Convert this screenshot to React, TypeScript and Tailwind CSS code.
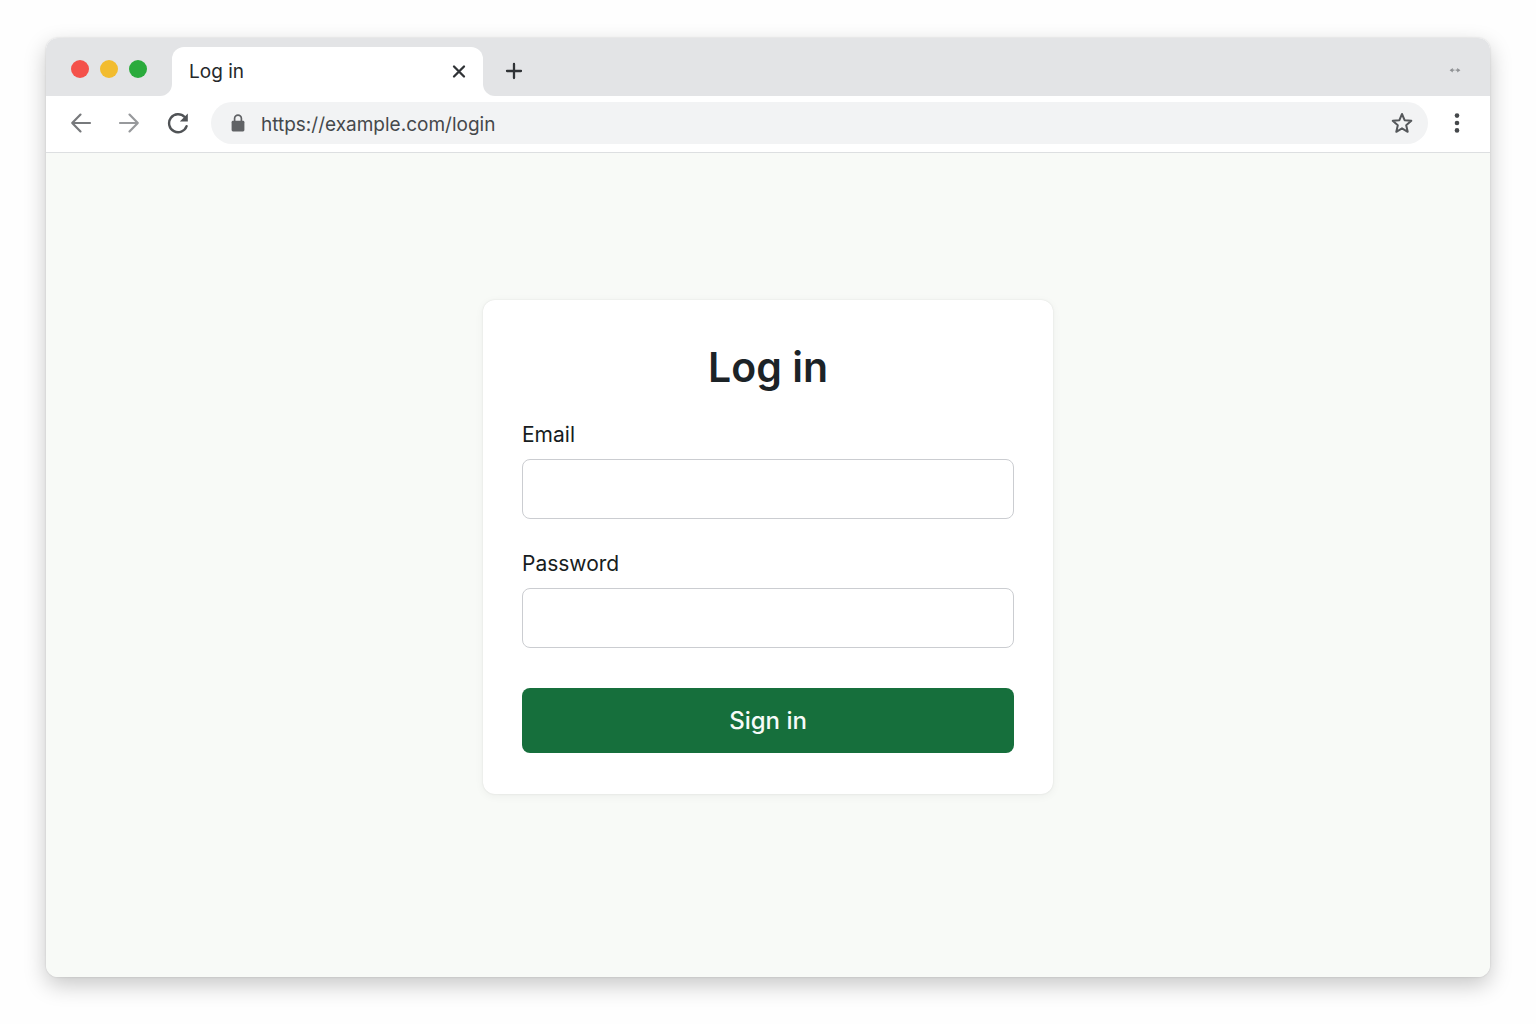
import type { ReactNode } from "react";

const CONTROLS = [
  { label: "Close window", color: "bg-[#f4514a]" },
  { label: "Minimize window", color: "bg-[#f2bc2f]" },
  { label: "Maximize window", color: "bg-[#2aab3c]" },
];

function IconButton({ label, className, children }: { label: string; className: string; children: ReactNode }) {
  return (
    <button type="button" aria-label={label} className={`flex shrink-0 items-center justify-center ${className}`}>
      {children}
    </button>
  );
}

function TabStrip() {
  return (
    <div className="flex h-[58px] bg-white">
      <div className="flex w-[126px] shrink-0 items-center gap-[11px] rounded-br-xl bg-[#e3e4e6] pt-[3px] pl-[25px]">
        {CONTROLS.map((c) => (
          <button key={c.label} type="button" aria-label={c.label} className={`size-[18px] rounded-full ${c.color}`} />
        ))}
      </div>
      <div className="w-[311px] bg-[#e3e4e6] pt-[9px]">
        <div className="flex h-full items-center justify-between rounded-t-xl bg-white pr-4 pl-[17px]">
          <span className="text-[19px] leading-6 text-[#25282b]">Log in</span>
          <IconButton label="Close tab" className="size-4 text-[#303336]">
            <svg viewBox="0 0 16 16" className="size-4" fill="none" stroke="currentColor" strokeWidth="2.3" strokeLinecap="round">
              <path d="M3 2.5l10 10M13 2.5L3 12.5" />
            </svg>
          </IconButton>
        </div>
      </div>
      <div className="flex flex-1 items-center justify-between rounded-bl-xl bg-[#e3e4e6] pt-2 pr-7 pl-[22px]">
        <IconButton label="New tab" className="size-[18px] text-[#303336]">
          <svg viewBox="0 0 18 18" className="size-[18px]" fill="none" stroke="currentColor" strokeWidth="2.3" strokeLinecap="round">
            <path d="M9 2v14M2 9h14" />
          </svg>
        </IconButton>
        <svg viewBox="0 0 14 8" className="h-2 w-[14px] text-[#8f9194]" fill="currentColor" aria-hidden="true">
          <path d="M1.6 3.2L4.8 1v1.6h1.6v1.2H4.8v1.6zM12.4 3.2L9.2 1v1.6H7.6v1.2h1.6v1.6z" />
        </svg>
      </div>
    </div>
  );
}

function Toolbar() {
  return (
    <div className="flex h-[57px] items-center border-b border-[#dddfe1] bg-white pr-[22px] pb-[2px] pl-6">
      <div className="flex items-center gap-[26px]">
        <IconButton label="Back" className="size-[22px] text-[#77797c]">
          <svg viewBox="0 0 22 22" className="size-[22px]" fill="none" stroke="currentColor" strokeWidth="2.2" strokeLinecap="round" strokeLinejoin="round">
            <path d="M20 11H2.2M10.5 2.6L2.2 11l8.3 8.4" />
          </svg>
        </IconButton>
        <IconButton label="Forward" className="size-[22px] text-[#97999c]">
          <svg viewBox="0 0 22 22" className="size-[22px]" fill="none" stroke="currentColor" strokeWidth="2.2" strokeLinecap="round" strokeLinejoin="round">
            <path d="M2 11h17.8M11.5 2.6l8.3 8.4-8.3 8.4" />
          </svg>
        </IconButton>
        <IconButton label="Reload" className="size-[22px] text-[#505356]">
          <svg viewBox="0 0 22 22" className="size-[22px]" fill="none">
            <path d="M20.6 14.2A9 9 0 1 1 18.6 5" stroke="currentColor" strokeWidth="2.4" strokeLinecap="round" />
            <path d="M21.8 1.4v8h-8z" fill="currentColor" />
          </svg>
        </IconButton>
      </div>
      <div className="ml-[23px] flex h-[42px] flex-1 items-center rounded-full bg-[#f2f3f4] pr-[14px] pl-5">
        <svg viewBox="0 0 14 18" className="h-[18px] w-[14px] shrink-0 text-[#606265]" aria-hidden="true">
          <path d="M3.6 8V4.6a3.4 3.4 0 0 1 6.8 0V8" fill="none" stroke="currentColor" strokeWidth="1.7" />
          <rect x="0.6" y="6.8" width="12.8" height="10.6" rx="1.4" fill="currentColor" />
        </svg>
        <input
          type="text"
          aria-label="Address"
          defaultValue="https://example.com/login"
          className="mx-4 h-8 min-w-0 flex-1 bg-transparent pt-[3px] text-[19px] text-[#45484b] outline-none"
        />
        <IconButton label="Bookmark this page" className="size-6 text-[#55585b]">
          <svg viewBox="0 0 24 24" className="size-6" fill="none" stroke="currentColor" strokeWidth="2" strokeLinejoin="round">
            <path d="M12 3l2.6 6.2 6.7.6-5.1 4.4 1.5 6.6L12 17.3l-5.7 3.5 1.5-6.6-5.1-4.4 6.7-.6z" />
          </svg>
        </IconButton>
      </div>
      <IconButton label="Browser menu" className="ml-[18px] size-[22px] text-[#45484b]">
        <svg viewBox="0 0 22 22" className="size-[22px]" fill="currentColor">
          <circle cx="11" cy="3.6" r="2.3" />
          <circle cx="11" cy="11" r="2.3" />
          <circle cx="11" cy="18.4" r="2.3" />
        </svg>
      </IconButton>
    </div>
  );
}

function Field({ id, label, type }: { id: string; label: string; type: string }) {
  return (
    <div className="flex flex-col gap-[10px]">
      <label htmlFor={id} className="text-[21px] leading-7 text-[#171d21]">
        {label}
      </label>
      <input
        id={id}
        type={type}
        className="h-[60px] w-full rounded-lg border border-[#cbcdd1] bg-white px-4 text-[20px] text-[#20262a] outline-none focus:border-[#166f3c]"
      />
    </div>
  );
}

export default function App() {
  return (
    <div className="flex min-h-screen flex-col bg-[#fefefe] px-[46px] pt-[38px] pb-[47px] font-['Inter',sans-serif]">
      <div className="flex flex-1 flex-col overflow-hidden rounded-xl shadow-[0_0_2px_rgba(0,0,0,0.16),0_8px_22px_rgba(0,0,0,0.22)]">
        <TabStrip />
        <Toolbar />
        <main className="flex flex-1 flex-col items-center bg-[#f8faf7] px-6 pt-[147px] pb-12">
          <form
            onSubmit={(e) => e.preventDefault()}
            className="flex w-full max-w-[570px] flex-col rounded-xl bg-white px-[39px] pt-[43px] pb-[41px] shadow-[0_0_2px_rgba(0,0,0,0.1),0_2px_10px_rgba(0,0,0,0.05)]"
          >
            <h1 className="mb-[30px] text-center text-[41px] leading-[48px] font-semibold text-[#1c2327]">Log in</h1>
            <div className="flex flex-col gap-[31px]">
              <Field id="email" label="Email" type="email" />
              <Field id="password" label="Password" type="password" />
            </div>
            <button type="submit" className="mt-10 h-[65px] rounded-lg bg-[#166f3c] text-[24px] font-medium text-[#f6fbf8]">
              Sign in
            </button>
          </form>
        </main>
      </div>
    </div>
  );
}
